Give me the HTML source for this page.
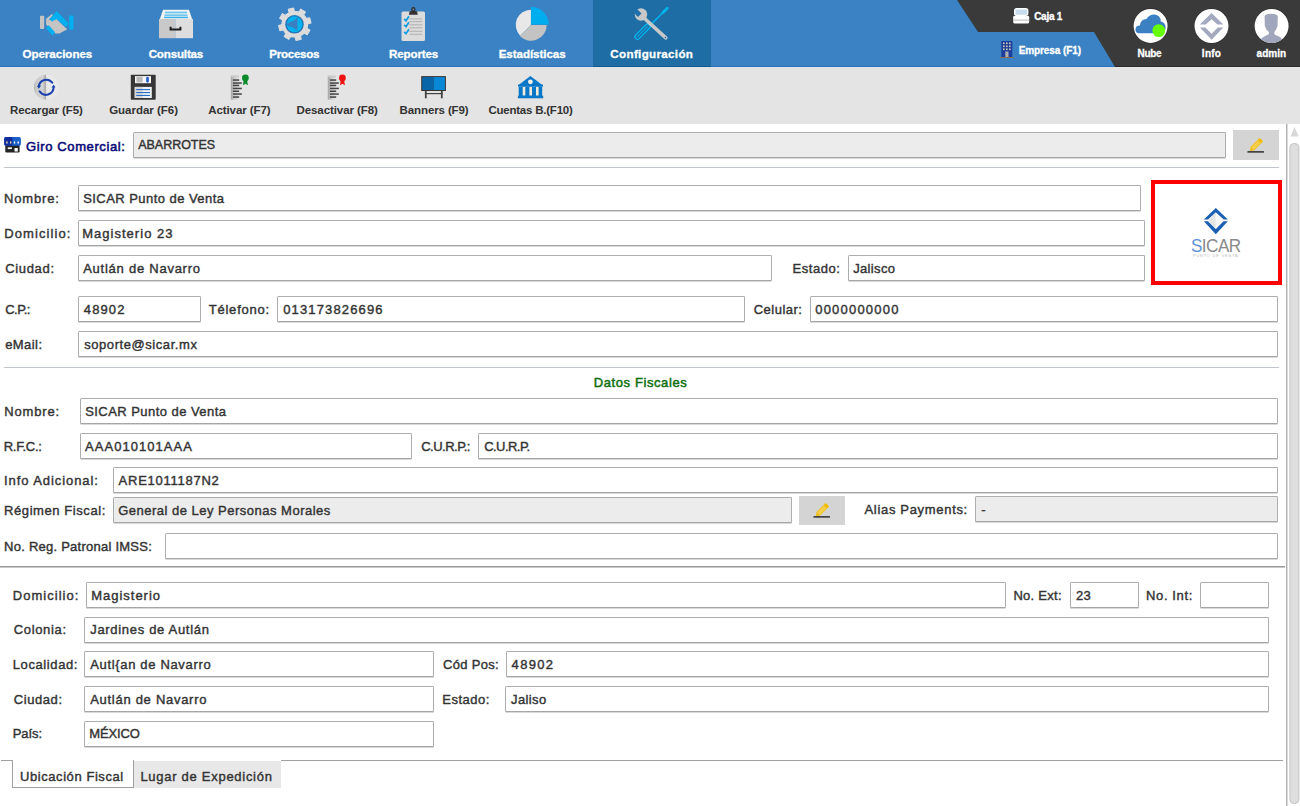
<!DOCTYPE html>
<html><head><meta charset="utf-8"><style>
html,body{margin:0;padding:0;width:1300px;height:806px;overflow:hidden;background:#fff;position:relative}
.t{position:absolute;white-space:nowrap;font-family:"Liberation Sans",sans-serif}
.b,.r,.s{position:absolute;box-sizing:content-box}
.s{overflow:visible}
</style></head><body>
<div class="r" style="left:0px;top:0px;width:1300px;height:67px;background:#3a82c3;"></div>
<div class="r" style="left:0px;top:66px;width:1300px;height:1px;background:#2876c0;"></div>
<div class="r" style="left:593px;top:0px;width:118px;height:67px;background:#1e6da5;"></div>
<div class="r" style="left:593px;top:66px;width:118px;height:1px;background:#0c5c9c;"></div>
<svg class="s" style="left:0px;top:0px" width="1300" height="67" viewBox="0 0 1300 67"><polygon points="957,0 1300,0 1300,67 1115,67 1094,32 978,32" fill="#3a3a3a"/><rect x="1115" y="66" width="185" height="1" fill="#2a2a2a"/></svg>
<div class="t" style="left:22.45px;top:48.38px;font-size:11.6px;line-height:11.6px;font-weight:bold;color:#fff;letter-spacing:-0.039px;-webkit-text-stroke:0.3px #fff;">Operaciones</div>
<div class="t" style="left:148.65px;top:48.38px;font-size:11.6px;line-height:11.6px;font-weight:bold;color:#fff;letter-spacing:-0.175px;-webkit-text-stroke:0.3px #fff;">Consultas</div>
<div class="t" style="left:269.35px;top:48.38px;font-size:11.6px;line-height:11.6px;font-weight:bold;color:#fff;letter-spacing:-0.293px;-webkit-text-stroke:0.3px #fff;">Procesos</div>
<div class="t" style="left:388.95px;top:48.38px;font-size:11.6px;line-height:11.6px;font-weight:bold;color:#fff;letter-spacing:-0.129px;-webkit-text-stroke:0.3px #fff;">Reportes</div>
<div class="t" style="left:498.65px;top:48.38px;font-size:11.6px;line-height:11.6px;font-weight:bold;color:#fff;letter-spacing:-0.056px;-webkit-text-stroke:0.3px #fff;">Estadísticas</div>
<div class="t" style="left:610.35px;top:48.38px;font-size:11.6px;line-height:11.6px;font-weight:bold;color:#fff;letter-spacing:0.334px;-webkit-text-stroke:0.3px #fff;">Configuración</div>
<div class="t" style="left:1034.15px;top:12.34px;font-size:10px;line-height:10px;font-weight:bold;color:#fff;letter-spacing:-0.240px;-webkit-text-stroke:0.3px #fff;">Caja 1</div>
<div class="t" style="left:1018.65px;top:46.14px;font-size:10px;line-height:10px;font-weight:bold;color:#fff;letter-spacing:-0.093px;-webkit-text-stroke:0.3px #fff;">Empresa (F1)</div>
<div class="t" style="left:1137.45px;top:49.14px;font-size:10px;line-height:10px;font-weight:bold;color:#fff;letter-spacing:-0.279px;-webkit-text-stroke:0.3px #fff;">Nube</div>
<div class="t" style="left:1201.85px;top:49.14px;font-size:10px;line-height:10px;font-weight:bold;color:#fff;letter-spacing:0.261px;-webkit-text-stroke:0.3px #fff;">Info</div>
<div class="t" style="left:1256.55px;top:49.14px;font-size:10px;line-height:10px;font-weight:bold;color:#fff;letter-spacing:0.040px;-webkit-text-stroke:0.3px #fff;">admin</div>
<div class="r" style="left:0px;top:67px;width:1300px;height:57px;background:#e4e4e4;"></div>
<div class="t" style="left:10.00px;top:104.97px;font-size:11.5px;line-height:11.5px;font-weight:bold;color:#333;letter-spacing:-0.109px;">Recargar (F5)</div>
<div class="t" style="left:109.20px;top:104.97px;font-size:11.5px;line-height:11.5px;font-weight:bold;color:#333;letter-spacing:-0.017px;">Guardar (F6)</div>
<div class="t" style="left:208.20px;top:104.97px;font-size:11.5px;line-height:11.5px;font-weight:bold;color:#333;letter-spacing:-0.076px;">Activar (F7)</div>
<div class="t" style="left:296.50px;top:104.97px;font-size:11.5px;line-height:11.5px;font-weight:bold;color:#333;letter-spacing:-0.080px;">Desactivar (F8)</div>
<div class="t" style="left:399.60px;top:104.97px;font-size:11.5px;line-height:11.5px;font-weight:bold;color:#333;letter-spacing:-0.115px;">Banners (F9)</div>
<div class="t" style="left:488.40px;top:104.97px;font-size:11.5px;line-height:11.5px;font-weight:bold;color:#333;letter-spacing:-0.222px;">Cuentas B.(F10)</div>
<div class="r" style="left:1286px;top:124px;width:1px;height:682px;background:#b0b0b0;"></div>
<div class="r" style="left:1287px;top:124px;width:1px;height:682px;background:#dcdcdc;"></div>
<div class="t" style="left:26.07px;top:139.60px;font-size:13px;line-height:13px;font-weight:normal;color:#0a0a78;letter-spacing:0.612px;-webkit-text-stroke:0.55px #0a0a78;">Giro Comercial:</div>
<div class="b" style="left:133px;top:132px;width:1091px;height:24px;background:#ececec;border:1px solid #adadad;border-bottom-color:#a6a6a6;border-radius:1.5px;box-shadow:0 1px 0 #d9d9d9;"></div>
<div class="t" style="left:138.20px;top:139.02px;font-size:12.5px;line-height:12.5px;font-weight:normal;color:#333;letter-spacing:-0.020px;-webkit-text-stroke:0.4px #333;">ABARROTES</div>
<div class="r" style="left:1233px;top:130px;width:46px;height:30px;background:#d4d4d4;"></div>
<div class="r" style="left:4px;top:167px;width:1275px;height:1px;background:#c0c4ce;"></div>
<div class="t" style="left:3.90px;top:192.00px;font-size:13px;line-height:13px;font-weight:normal;color:#333;letter-spacing:0.861px;-webkit-text-stroke:0.4px #333;">Nombre:</div>
<div class="b" style="left:78px;top:185px;width:1061px;height:24px;background:#fff;border:1px solid #adadad;border-bottom-color:#a6a6a6;border-radius:1.5px;box-shadow:0 1px 0 #d9d9d9;"></div>
<div class="t" style="left:83.20px;top:191.60px;font-size:13px;line-height:13px;font-weight:normal;color:#333;letter-spacing:0.451px;-webkit-text-stroke:0.4px #333;">SICAR Punto de Venta</div>
<div class="t" style="left:4.20px;top:227.00px;font-size:13px;line-height:13px;font-weight:normal;color:#333;letter-spacing:1.097px;-webkit-text-stroke:0.4px #333;">Domicilio:</div>
<div class="b" style="left:78px;top:220px;width:1065px;height:24px;background:#fff;border:1px solid #adadad;border-bottom-color:#a6a6a6;border-radius:1.5px;box-shadow:0 1px 0 #d9d9d9;"></div>
<div class="t" style="left:82.20px;top:226.60px;font-size:13px;line-height:13px;font-weight:normal;color:#333;letter-spacing:1.024px;-webkit-text-stroke:0.4px #333;">Magisterio 23</div>
<div class="t" style="left:5.20px;top:262.00px;font-size:13px;line-height:13px;font-weight:normal;color:#333;letter-spacing:0.667px;-webkit-text-stroke:0.4px #333;">Ciudad:</div>
<div class="b" style="left:78px;top:255px;width:692px;height:24px;background:#fff;border:1px solid #adadad;border-bottom-color:#a6a6a6;border-radius:1.5px;box-shadow:0 1px 0 #d9d9d9;"></div>
<div class="t" style="left:83.20px;top:261.60px;font-size:13px;line-height:13px;font-weight:normal;color:#333;letter-spacing:0.753px;-webkit-text-stroke:0.4px #333;">Autlán de Navarro</div>
<div class="t" style="left:792.50px;top:261.60px;font-size:13px;line-height:13px;font-weight:normal;color:#333;letter-spacing:0.555px;-webkit-text-stroke:0.4px #333;">Estado:</div>
<div class="b" style="left:848px;top:255px;width:295px;height:24px;background:#fff;border:1px solid #adadad;border-bottom-color:#a6a6a6;border-radius:1.5px;box-shadow:0 1px 0 #d9d9d9;"></div>
<div class="t" style="left:853.20px;top:261.60px;font-size:13px;line-height:13px;font-weight:normal;color:#333;letter-spacing:0.349px;-webkit-text-stroke:0.4px #333;">Jalisco</div>
<div class="t" style="left:5.20px;top:303.00px;font-size:13px;line-height:13px;font-weight:normal;color:#333;letter-spacing:-0.502px;-webkit-text-stroke:0.4px #333;">C.P.:</div>
<div class="b" style="left:78px;top:296px;width:121px;height:24px;background:#fff;border:1px solid #adadad;border-bottom-color:#a6a6a6;border-radius:1.5px;box-shadow:0 1px 0 #d9d9d9;"></div>
<div class="t" style="left:83.80px;top:302.60px;font-size:13px;line-height:13px;font-weight:normal;color:#333;letter-spacing:1.120px;-webkit-text-stroke:0.4px #333;">48902</div>
<div class="t" style="left:208.70px;top:302.60px;font-size:13px;line-height:13px;font-weight:normal;color:#333;letter-spacing:0.789px;-webkit-text-stroke:0.4px #333;">Télefono:</div>
<div class="b" style="left:277px;top:296px;width:466px;height:24px;background:#fff;border:1px solid #adadad;border-bottom-color:#a6a6a6;border-radius:1.5px;box-shadow:0 1px 0 #d9d9d9;"></div>
<div class="t" style="left:283.20px;top:302.60px;font-size:13px;line-height:13px;font-weight:normal;color:#333;letter-spacing:1.143px;-webkit-text-stroke:0.4px #333;">013173826696</div>
<div class="t" style="left:753.70px;top:302.60px;font-size:13px;line-height:13px;font-weight:normal;color:#333;letter-spacing:0.488px;-webkit-text-stroke:0.4px #333;">Celular:</div>
<div class="b" style="left:810px;top:296px;width:466px;height:24px;background:#fff;border:1px solid #adadad;border-bottom-color:#a6a6a6;border-radius:1.5px;box-shadow:0 1px 0 #d9d9d9;"></div>
<div class="t" style="left:815.20px;top:302.60px;font-size:13px;line-height:13px;font-weight:normal;color:#333;letter-spacing:1.214px;-webkit-text-stroke:0.4px #333;">0000000000</div>
<div class="t" style="left:5.20px;top:338.00px;font-size:13px;line-height:13px;font-weight:normal;color:#333;letter-spacing:0.427px;-webkit-text-stroke:0.4px #333;">eMail:</div>
<div class="b" style="left:78px;top:331px;width:1198px;height:24px;background:#fff;border:1px solid #adadad;border-bottom-color:#a6a6a6;border-radius:1.5px;box-shadow:0 1px 0 #d9d9d9;"></div>
<div class="t" style="left:84.20px;top:337.60px;font-size:13px;line-height:13px;font-weight:normal;color:#333;letter-spacing:0.565px;-webkit-text-stroke:0.4px #333;">soporte@sicar.mx</div>
<div class="b" style="left:1151px;top:180px;width:123px;height:97px;border:4px solid #f00;background:#fff"></div>
<div class="r" style="left:4px;top:367px;width:1275px;height:1px;background:#c0c4ce;"></div>
<div class="t" style="left:593.75px;top:376.30px;font-size:13px;line-height:13px;font-weight:normal;color:#0f6f0f;letter-spacing:0.596px;-webkit-text-stroke:0.5px #0f6f0f;">Datos Fiscales</div>
<div class="t" style="left:4.20px;top:405.00px;font-size:13px;line-height:13px;font-weight:normal;color:#333;letter-spacing:0.861px;-webkit-text-stroke:0.4px #333;">Nombre:</div>
<div class="b" style="left:80px;top:398px;width:1196px;height:24px;background:#fff;border:1px solid #adadad;border-bottom-color:#a6a6a6;border-radius:1.5px;box-shadow:0 1px 0 #d9d9d9;"></div>
<div class="t" style="left:85.20px;top:404.60px;font-size:13px;line-height:13px;font-weight:normal;color:#333;letter-spacing:0.451px;-webkit-text-stroke:0.4px #333;">SICAR Punto de Venta</div>
<div class="t" style="left:3.70px;top:440.00px;font-size:13px;line-height:13px;font-weight:normal;color:#333;letter-spacing:-0.252px;-webkit-text-stroke:0.4px #333;">R.F.C.:</div>
<div class="b" style="left:80px;top:433px;width:330px;height:24px;background:#fff;border:1px solid #adadad;border-bottom-color:#a6a6a6;border-radius:1.5px;box-shadow:0 1px 0 #d9d9d9;"></div>
<div class="t" style="left:85.00px;top:439.60px;font-size:13px;line-height:13px;font-weight:normal;color:#333;letter-spacing:1.051px;-webkit-text-stroke:0.4px #333;">AAA010101AAA</div>
<div class="t" style="left:421.20px;top:440.00px;font-size:13px;line-height:13px;font-weight:normal;color:#333;letter-spacing:-0.501px;-webkit-text-stroke:0.4px #333;">C.U.R.P.:</div>
<div class="b" style="left:478px;top:433px;width:798px;height:24px;background:#fff;border:1px solid #adadad;border-bottom-color:#a6a6a6;border-radius:1.5px;box-shadow:0 1px 0 #d9d9d9;"></div>
<div class="t" style="left:484.20px;top:439.60px;font-size:13px;line-height:13px;font-weight:normal;color:#333;letter-spacing:-0.542px;-webkit-text-stroke:0.4px #333;">C.U.R.P.</div>
<div class="t" style="left:4.10px;top:474.00px;font-size:13px;line-height:13px;font-weight:normal;color:#333;letter-spacing:0.918px;-webkit-text-stroke:0.4px #333;">Info Adicional:</div>
<div class="b" style="left:113px;top:467px;width:1163px;height:24px;background:#fff;border:1px solid #adadad;border-bottom-color:#a6a6a6;border-radius:1.5px;box-shadow:0 1px 0 #d9d9d9;"></div>
<div class="t" style="left:118.60px;top:473.60px;font-size:13px;line-height:13px;font-weight:normal;color:#333;letter-spacing:0.746px;-webkit-text-stroke:0.4px #333;">ARE1011187N2</div>
<div class="t" style="left:4.10px;top:504.00px;font-size:13px;line-height:13px;font-weight:normal;color:#333;letter-spacing:0.573px;-webkit-text-stroke:0.4px #333;">Régimen Fiscal:</div>
<div class="b" style="left:113px;top:497px;width:677px;height:24px;background:#ececec;border:1px solid #adadad;border-bottom-color:#a6a6a6;border-radius:1.5px;box-shadow:0 1px 0 #d9d9d9;"></div>
<div class="t" style="left:118.20px;top:503.60px;font-size:13px;line-height:13px;font-weight:normal;color:#333;letter-spacing:0.494px;-webkit-text-stroke:0.4px #333;">General de Ley Personas Morales</div>
<div class="r" style="left:799px;top:496px;width:46px;height:29px;background:#d4d4d4;"></div>
<div class="t" style="left:864.50px;top:503.00px;font-size:13px;line-height:13px;font-weight:normal;color:#333;letter-spacing:0.679px;-webkit-text-stroke:0.4px #333;">Alias Payments:</div>
<div class="b" style="left:975px;top:496px;width:301px;height:24px;background:#ececec;border:1px solid #adadad;border-bottom-color:#a6a6a6;border-radius:1.5px;box-shadow:0 1px 0 #d9d9d9;"></div>
<div class="t" style="left:981.20px;top:502.60px;font-size:13px;line-height:13px;font-weight:normal;color:#333;letter-spacing:0.600px;-webkit-text-stroke:0.4px #333;">-</div>
<div class="t" style="left:4.10px;top:540.00px;font-size:13px;line-height:13px;font-weight:normal;color:#333;letter-spacing:0.244px;-webkit-text-stroke:0.4px #333;">No. Reg. Patronal IMSS:</div>
<div class="b" style="left:165px;top:533px;width:1111px;height:24px;background:#fff;border:1px solid #adadad;border-bottom-color:#a6a6a6;border-radius:1.5px;box-shadow:0 1px 0 #d9d9d9;"></div>
<div class="r" style="left:0px;top:566px;width:1285px;height:1px;background:#9a9a9a;"></div>
<div class="r" style="left:0px;top:567px;width:1285px;height:1px;background:#c8c8c8;"></div>
<div class="t" style="left:12.80px;top:588.60px;font-size:13px;line-height:13px;font-weight:normal;color:#333;letter-spacing:1.030px;-webkit-text-stroke:0.4px #333;">Domicilio:</div>
<div class="b" style="left:86px;top:582px;width:918px;height:24px;background:#fff;border:1px solid #adadad;border-bottom-color:#a6a6a6;border-radius:1.5px;box-shadow:0 1px 0 #d9d9d9;"></div>
<div class="t" style="left:91.20px;top:588.60px;font-size:13px;line-height:13px;font-weight:normal;color:#333;letter-spacing:0.985px;-webkit-text-stroke:0.4px #333;">Magisterio</div>
<div class="t" style="left:1013.40px;top:588.80px;font-size:13px;line-height:13px;font-weight:normal;color:#333;letter-spacing:0.282px;-webkit-text-stroke:0.4px #333;">No. Ext:</div>
<div class="b" style="left:1070px;top:582px;width:67px;height:24px;background:#fff;border:1px solid #adadad;border-bottom-color:#a6a6a6;border-radius:1.5px;box-shadow:0 1px 0 #d9d9d9;"></div>
<div class="t" style="left:1076.00px;top:588.60px;font-size:13px;line-height:13px;font-weight:normal;color:#333;letter-spacing:0.170px;-webkit-text-stroke:0.4px #333;">23</div>
<div class="t" style="left:1146.00px;top:588.80px;font-size:13px;line-height:13px;font-weight:normal;color:#333;letter-spacing:0.629px;-webkit-text-stroke:0.4px #333;">No. Int:</div>
<div class="b" style="left:1200px;top:582px;width:67px;height:24px;background:#fff;border:1px solid #adadad;border-bottom-color:#a6a6a6;border-radius:1.5px;box-shadow:0 1px 0 #d9d9d9;"></div>
<div class="t" style="left:13.80px;top:623.40px;font-size:13px;line-height:13px;font-weight:normal;color:#333;letter-spacing:0.645px;-webkit-text-stroke:0.4px #333;">Colonia:</div>
<div class="b" style="left:84px;top:617px;width:1183px;height:24px;background:#fff;border:1px solid #adadad;border-bottom-color:#a6a6a6;border-radius:1.5px;box-shadow:0 1px 0 #d9d9d9;"></div>
<div class="t" style="left:90.20px;top:623.40px;font-size:13px;line-height:13px;font-weight:normal;color:#333;letter-spacing:0.691px;-webkit-text-stroke:0.4px #333;">Jardines de Autlán</div>
<div class="t" style="left:12.80px;top:658.00px;font-size:13px;line-height:13px;font-weight:normal;color:#333;letter-spacing:0.594px;-webkit-text-stroke:0.4px #333;">Localidad:</div>
<div class="b" style="left:84px;top:651px;width:348px;height:24px;background:#fff;border:1px solid #adadad;border-bottom-color:#a6a6a6;border-radius:1.5px;box-shadow:0 1px 0 #d9d9d9;"></div>
<div class="t" style="left:90.20px;top:657.60px;font-size:13px;line-height:13px;font-weight:normal;color:#333;letter-spacing:0.665px;-webkit-text-stroke:0.4px #333;">Autl{an de Navarro</div>
<div class="t" style="left:443.00px;top:658.00px;font-size:13px;line-height:13px;font-weight:normal;color:#333;letter-spacing:0.306px;-webkit-text-stroke:0.4px #333;">Cód Pos:</div>
<div class="b" style="left:506px;top:651px;width:761px;height:24px;background:#fff;border:1px solid #adadad;border-bottom-color:#a6a6a6;border-radius:1.5px;box-shadow:0 1px 0 #d9d9d9;"></div>
<div class="t" style="left:511.60px;top:657.60px;font-size:13px;line-height:13px;font-weight:normal;color:#333;letter-spacing:1.320px;-webkit-text-stroke:0.4px #333;">48902</div>
<div class="t" style="left:13.80px;top:693.00px;font-size:13px;line-height:13px;font-weight:normal;color:#333;letter-spacing:0.567px;-webkit-text-stroke:0.4px #333;">Ciudad:</div>
<div class="b" style="left:84px;top:686px;width:348px;height:24px;background:#fff;border:1px solid #adadad;border-bottom-color:#a6a6a6;border-radius:1.5px;box-shadow:0 1px 0 #d9d9d9;"></div>
<div class="t" style="left:90.20px;top:692.60px;font-size:13px;line-height:13px;font-weight:normal;color:#333;letter-spacing:0.716px;-webkit-text-stroke:0.4px #333;">Autlán de Navarro</div>
<div class="t" style="left:442.20px;top:693.00px;font-size:13px;line-height:13px;font-weight:normal;color:#333;letter-spacing:0.521px;-webkit-text-stroke:0.4px #333;">Estado:</div>
<div class="b" style="left:505px;top:686px;width:762px;height:24px;background:#fff;border:1px solid #adadad;border-bottom-color:#a6a6a6;border-radius:1.5px;box-shadow:0 1px 0 #d9d9d9;"></div>
<div class="t" style="left:511.00px;top:692.60px;font-size:13px;line-height:13px;font-weight:normal;color:#333;letter-spacing:0.379px;-webkit-text-stroke:0.4px #333;">Jaliso</div>
<div class="t" style="left:12.80px;top:727.40px;font-size:13px;line-height:13px;font-weight:normal;color:#333;letter-spacing:-0.103px;-webkit-text-stroke:0.4px #333;">País:</div>
<div class="b" style="left:84px;top:721px;width:348px;height:24px;background:#fff;border:1px solid #adadad;border-bottom-color:#a6a6a6;border-radius:1.5px;box-shadow:0 1px 0 #d9d9d9;"></div>
<div class="t" style="left:89.20px;top:727.40px;font-size:13px;line-height:13px;font-weight:normal;color:#333;letter-spacing:-0.114px;-webkit-text-stroke:0.4px #333;">MÉXICO</div>
<div class="r" style="left:1px;top:760px;width:11px;height:1px;background:#a0a0a0;"></div>
<div class="r" style="left:281px;top:760px;width:1002px;height:1px;background:#a0a0a0;"></div>
<div class="r" style="left:133px;top:761px;width:148px;height:27px;background:#e8e8e8;"></div>
<div class="b" style="left:12px;top:760px;width:120px;height:27px;border:1px solid #a0a0a0;border-top:none;background:#fff"></div>
<div class="t" style="left:20.00px;top:770.20px;font-size:13px;line-height:13px;font-weight:normal;color:#333;letter-spacing:0.570px;-webkit-text-stroke:0.4px #333;">Ubicación Fiscal</div>
<div class="t" style="left:140.40px;top:770.20px;font-size:13px;line-height:13px;font-weight:normal;color:#333;letter-spacing:0.722px;-webkit-text-stroke:0.4px #333;">Lugar de Expedición</div>
<svg class="s" style="left:36px;top:6px" width="42" height="34" viewBox="0 0 42 34">
<rect x="4" y="9.7" width="4.2" height="13.3" rx="1" fill="#c4c4c4"/>
<rect x="33.1" y="9.5" width="4.4" height="13.9" rx="1" fill="#00b0f0"/>
<polygon points="10.1,12.7 16,8 17,9 12.7,14 20.3,13 31.2,23.2 23.6,27.4 19,27.4 10.1,18.6" fill="#c4c4c4"/>
<polygon points="13.9,13.1 20.7,5.5 32.1,16.9 31.4,19.8 29.5,20.3 20.7,12.7 16,15.2" fill="#00b0f0" stroke="#00b0f0" stroke-width="0.6" stroke-linejoin="round"/>
<polygon points="10,22.3 12.7,19.2 19.2,26.4 16.3,29.6" fill="#00b0f0"/>
</svg>
<svg class="s" style="left:155px;top:6px" width="42" height="36" viewBox="0 0 42 36">
<polygon points="8,3.8 34,3.8 37.2,13.2 4.8,13.2" fill="#f2f2f2"/>
<rect x="10" y="5.6" width="22" height="1.8" fill="#6cc8ee"/>
<rect x="9.5" y="8.4" width="23" height="1.8" fill="#6cc8ee"/>
<rect x="9" y="10.8" width="24" height="1.4" fill="#3cb4ea"/>
<rect x="4" y="13" width="16.3" height="19.2" fill="#c9c9c9"/>
<rect x="20.3" y="13" width="17.7" height="19.2" fill="#dedede"/>
<path d="M15.6,20.8 v2.6 h9.8 v-2.6" fill="none" stroke="#1e1e1e" stroke-width="2"/>
</svg>
<svg class="s" style="left:274px;top:4px" width="42" height="40" viewBox="0 0 42 40"><polygon points="22.71,7.54 24.96,8.09 26.78,5.14 31.33,7.89 29.57,10.88 31.10,12.60 32.30,14.58 35.67,13.78 36.95,18.94 33.59,19.81 33.46,22.11 32.91,24.36 35.86,26.18 33.11,30.73 30.12,28.97 28.40,30.50 26.42,31.70 27.22,35.07 22.06,36.35 21.19,32.99 18.89,32.86 16.64,32.31 14.82,35.26 10.27,32.51 12.03,29.52 10.50,27.80 9.30,25.82 5.93,26.62 4.65,21.46 8.01,20.59 8.14,18.29 8.69,16.04 5.74,14.22 8.49,9.67 11.48,11.43 13.20,9.90 15.18,8.70 14.38,5.33 19.54,4.05 20.41,7.41" fill="#dcdcdc" stroke="#dcdcdc" stroke-width="1.2" stroke-linejoin="round"/>
<circle cx="20.5" cy="20.3" r="9.3" fill="#2a72b4"/>
<circle cx="20.5" cy="20.3" r="8" fill="#00b2f0"/>
<polygon points="13,19.5 20,16.5 23.5,13 23.5,27 20,24 13,21.5" fill="#3a7fc0"/>
</svg>
<svg class="s" style="left:396px;top:4px" width="34" height="40" viewBox="0 0 34 40">
<rect x="5.5" y="7.4" width="23.5" height="29.6" rx="1.6" fill="#dcdcdc"/>
<path d="M12.9,10.7 L13.6,7.6 Q14,6.9 15,6.9 L19.7,6.9 Q20.7,6.9 21.1,7.6 L21.8,10.7 Z" fill="#333"/>
<circle cx="17.35" cy="5.2" r="2.2" fill="#333"/><circle cx="17.35" cy="5.4" r="0.9" fill="#6a8fb8"/>
<rect x="13.4" y="14.35" width="13" height="1.1" fill="#b4b4b4"/><rect x="13.4" y="17.05" width="13" height="1.1" fill="#b4b4b4"/><rect x="13.4" y="20.25" width="13" height="1.1" fill="#b4b4b4"/><rect x="13.4" y="23.25" width="13" height="1.1" fill="#b4b4b4"/><rect x="13.4" y="26.75" width="13" height="1.1" fill="#b4b4b4"/><rect x="13.4" y="29.75" width="13" height="1.1" fill="#b4b4b4"/><polyline points="8.2,14.9 10,16.8 12.9,12.3" fill="none" stroke="#0a9ce2" stroke-width="1.7"/><polyline points="8.2,20.8 10,22.7 12.9,18.2" fill="none" stroke="#0a9ce2" stroke-width="1.7"/><polyline points="8.2,27.8 10,29.7 12.9,25.2" fill="none" stroke="#0a9ce2" stroke-width="1.7"/></svg>
<svg class="s" style="left:512px;top:4px" width="42" height="40" viewBox="0 0 42 40">
<path d="M18.9,20.9 L8.15,31.65 A15.2,15.2 0 0 1 18.90,5.70 Z" fill="#e8e8e8"/>
<path d="M18.9,20.9 L34.70,20.90 A15.8,15.8 0 0 1 7.73,32.07 Z" fill="#c3c3c3"/>
<path d="M19.1,20.6 L19.10,3.00 A17.6,17.6 0 0 1 36.70,20.60 Z" fill="#00aeef"/>
</svg>
<svg class="s" style="left:630px;top:4px" width="42" height="40" viewBox="0 0 42 40">
<line x1="22" y1="19.5" x2="35" y2="6.5" stroke="#00b4f0" stroke-width="1.6"/>
<line x1="33" y1="8.5" x2="37.3" y2="4.3" stroke="#00b4f0" stroke-width="2.8" stroke-linecap="round"/>
<g transform="rotate(-45 12.5 27.7)"><rect x="3" y="25.2" width="19" height="5" rx="2.2" fill="none" stroke="#00b4f0" stroke-width="1.3"/><line x1="5" y1="27.7" x2="20" y2="27.7" stroke="#00b4f0" stroke-width="1"/></g>
<line x1="14" y1="14" x2="35.8" y2="33.8" stroke="#c8c8c8" stroke-width="3.6" stroke-linecap="round"/>
<circle cx="11" cy="10.5" r="6.2" fill="#c8c8c8"/>
<rect x="4.5" y="4.5" width="5" height="7" transform="rotate(-45 8 8)" fill="#1f6fab"/>
<circle cx="35.4" cy="33.6" r="0.8" fill="#1f6fab"/>
</svg>
<svg class="s" style="left:1013px;top:8px" width="17" height="16" viewBox="0 0 17 16">
<rect x="1.7" y="0.8" width="13" height="6.6" rx="1.8" fill="#c7dcef" stroke="#fff" stroke-width="1.4"/>
<rect x="0.2" y="8" width="16" height="7.4" rx="1.3" fill="#fff"/>
<rect x="0.2" y="11.7" width="16" height="0.7" fill="#9a9a9a"/>
</svg>
<svg class="s" style="left:1000px;top:41px" width="14" height="17" viewBox="0 0 14 17">
<rect x="1.3" y="0" width="11" height="16" fill="#1c3f9e"/>
<rect x="5.3" y="10.5" width="3.2" height="5.5" fill="#b0b0b0"/>
<rect x="0" y="16" width="14" height="1" fill="#8a6d4a"/>
<rect x="3" y="1.5" width="1.6" height="1.6" fill="#d8ceb0"/><rect x="3" y="4.5" width="1.6" height="1.6" fill="#d8ceb0"/><rect x="3" y="7.5" width="1.6" height="1.6" fill="#d8ceb0"/><rect x="6" y="1.5" width="1.6" height="1.6" fill="#d8ceb0"/><rect x="6" y="4.5" width="1.6" height="1.6" fill="#d8ceb0"/><rect x="6" y="7.5" width="1.6" height="1.6" fill="#d8ceb0"/><rect x="9" y="1.5" width="1.6" height="1.6" fill="#d8ceb0"/><rect x="9" y="4.5" width="1.6" height="1.6" fill="#d8ceb0"/><rect x="9" y="7.5" width="1.6" height="1.6" fill="#d8ceb0"/></svg>
<svg class="s" style="left:1130px;top:6px" width="42" height="40" viewBox="0 0 42 40">
<circle cx="20.6" cy="19.9" r="17.6" fill="#222" opacity="0.5"/>
<circle cx="20.6" cy="19.9" r="17" fill="#fff"/>
<path d="M8.5,27.2 Q5.2,27 5.5,23 Q6,19.5 10,19.6 Q10.5,13 16.5,13 Q19,8.4 24.5,8.5 Q30.5,9 30.8,15.5 Q35.8,16.5 35.6,22 Q35.3,27.2 30,27.2 Z" fill="#3a80c3"/>
<circle cx="28.8" cy="24.6" r="6.4" fill="#66ff00"/>
</svg>
<svg class="s" style="left:1190px;top:6px" width="42" height="40" viewBox="0 0 42 40">
<circle cx="21.5" cy="20" r="17.6" fill="#222" opacity="0.5"/>
<circle cx="21.5" cy="20" r="17" fill="#fff"/>
<polygon points="21.6,7 33.3,18.6 27.5,18.6 21.6,13.2 15.8,18.6 9.7,18.6" fill="#a3aabf"/>
<polygon points="9.9,21.4 15.4,21.4 21.6,27.8 27.8,21.4 33.3,21.4 21.6,33.8" fill="#a3aabf"/>
</svg>
<svg class="s" style="left:1250px;top:6px" width="42" height="40" viewBox="0 0 42 40">
<circle cx="21.6" cy="20" r="17.6" fill="#222" opacity="0.5"/>
<clipPath id="adc"><circle cx="21.6" cy="20" r="17"/></clipPath>
<circle cx="21.6" cy="20" r="17" fill="#fff"/>
<g clip-path="url(#adc)" fill="#a0a6bc">
<path d="M14.6,10.5 Q15,7.8 21,7.8 Q27.5,7.8 27.8,10.5 L27.5,20 Q26,24.5 24.2,26 L24.6,28.5 Q30,30.5 32,33 L32,40 L11,40 L11,33 Q13,30.5 18.6,28.5 L19,26 Q16,24 14.8,20 Z"/>
</g>
</svg>
<svg class="s" style="left:30px;top:72px" width="30" height="30" viewBox="0 0 30 30">
<defs><linearGradient id="rg" x1="0" x2="1"><stop offset="0" stop-color="#b4b4b4"/><stop offset="0.15" stop-color="#c8c8c8"/><stop offset="0.7" stop-color="#d4d4d4"/><stop offset="1" stop-color="#a4a4a4"/></linearGradient></defs>
<path d="M16.3,2.8 A12.4,12.4 0 0 0 16.3,27.7 Z" fill="url(#rg)"/>
<path d="M16.3,2.8 A12.4,12.4 0 0 1 16.3,27.7 Z" fill="#e9e9e9"/>
<path d="M8.8,14.3 A7.6,7.6 0 0 1 22.3,10.6" fill="none" stroke="#1a3fae" stroke-width="2" stroke-linecap="round"/>
<path d="M9.6,19.3 A7.6,7.6 0 0 0 23.6,15.3" fill="none" stroke="#1a3fae" stroke-width="2" stroke-linecap="round"/>
<polygon points="7,14 11.2,13.6 8.8,16.8" fill="#1543b0"/>
<polygon points="21.5,15.5 25.5,15.2 23.6,12.8" fill="#1543b0"/>
</svg>
<svg class="s" style="left:128px;top:72px" width="30" height="30" viewBox="0 0 30 30">
<rect x="2.8" y="2.8" width="24.9" height="24.9" rx="0.8" fill="#363636"/>
<rect x="7" y="4.1" width="16" height="7.1" fill="#f4f4f4"/>
<rect x="8.5" y="4.8" width="6" height="5.6" fill="#b8b8b8"/>
<rect x="18.2" y="4.8" width="2.6" height="5.6" rx="1.2" fill="#1a5ac8"/>
<rect x="6.7" y="14.9" width="17.1" height="11.1" fill="#eef2f6"/>
<rect x="6.7" y="14.9" width="8" height="11.1" fill="#d6d6d6"/>
<rect x="8.2" y="17" width="13.8" height="1.1" fill="#2a70c8"/>
<rect x="8.2" y="20" width="13.8" height="1.1" fill="#2a70c8"/>
<rect x="8.2" y="22.9" width="13.8" height="1.1" fill="#2a70c8"/>
</svg>
<svg class="s" style="left:226px;top:72px" width="30" height="30" viewBox="0 0 30 30"><defs><linearGradient id="cg0a8a2a" x1="0" x2="1"><stop offset="0" stop-color="#a4a4a4"/><stop offset="0.35" stop-color="#c8c8c8"/><stop offset="1" stop-color="#e6e6e6"/></linearGradient></defs><rect x="4.8" y="3.7" width="8.6" height="24" fill="url(#cg0a8a2a)"/><rect x="4.8" y="3.7" width="8.2" height="1.5" fill="#c8c8c8"/><rect x="6.9" y="7.3" width="6.3" height="1.5" fill="#444"/><rect x="6.9" y="10.3" width="8.9" height="1.5" fill="#444"/><rect x="6.9" y="12.7" width="6.3" height="1.5" fill="#444"/><rect x="6.9" y="15.7" width="8.9" height="1.5" fill="#444"/><rect x="6.9" y="18.5" width="6.3" height="1.5" fill="#444"/><rect x="6.9" y="21.3" width="8.9" height="1.5" fill="#444"/><rect x="6.9" y="24.3" width="6.3" height="1.5" fill="#444"/>
<polygon points="17.8,7.5 16.9,13.2 19.4,11.8 21.9,13.2 21,7.5" fill="#0a8a2a"/><circle cx="19.4" cy="6" r="3.4" fill="#0a8a2a"/></svg>
<svg class="s" style="left:322.8px;top:72px" width="30" height="30" viewBox="0 0 30 30"><defs><linearGradient id="cgee1111" x1="0" x2="1"><stop offset="0" stop-color="#a4a4a4"/><stop offset="0.35" stop-color="#c8c8c8"/><stop offset="1" stop-color="#e6e6e6"/></linearGradient></defs><rect x="4.8" y="3.7" width="8.6" height="24" fill="url(#cgee1111)"/><rect x="4.8" y="3.7" width="8.2" height="1.5" fill="#c8c8c8"/><rect x="6.9" y="7.3" width="6.3" height="1.5" fill="#444"/><rect x="6.9" y="10.3" width="8.9" height="1.5" fill="#444"/><rect x="6.9" y="12.7" width="6.3" height="1.5" fill="#444"/><rect x="6.9" y="15.7" width="8.9" height="1.5" fill="#444"/><rect x="6.9" y="18.5" width="6.3" height="1.5" fill="#444"/><rect x="6.9" y="21.3" width="8.9" height="1.5" fill="#444"/><rect x="6.9" y="24.3" width="6.3" height="1.5" fill="#444"/>
<polygon points="17.8,7.5 16.9,13.2 19.4,11.8 21.9,13.2 21,7.5" fill="#ee1111"/><circle cx="19.4" cy="6" r="3.4" fill="#ee1111"/></svg>
<svg class="s" style="left:416px;top:72px" width="34" height="30" viewBox="0 0 34 30">
<rect x="5.2" y="4.1" width="24.7" height="14.9" fill="#333"/>
<rect x="6.2" y="5.1" width="11.5" height="12.9" fill="#0a64a8"/>
<rect x="17.7" y="5.1" width="11.2" height="12.9" fill="#0a88d8"/>
<rect x="8.9" y="19" width="1.8" height="7.3" fill="#444"/>
<rect x="24.9" y="19" width="1.8" height="7.3" fill="#444"/>
<rect x="8.9" y="21" width="17.8" height="1.2" fill="#444"/>
</svg>
<svg class="s" style="left:516px;top:72px" width="30" height="30" viewBox="0 0 30 30">
<polygon points="14.4,4.1 26.9,13.4 1.9,13.4" fill="#0a78c8"/>
<rect x="2" y="12.6" width="25" height="2" fill="#0a78c8"/>
<circle cx="14.4" cy="9.8" r="2.4" fill="#f4f0e8"/>
<rect x="2.7" y="14.5" width="23.5" height="9.6" fill="#0a78c8"/>
<rect x="6.7" y="15" width="2.6" height="8.7" fill="#f2ead8"/>
<rect x="13.4" y="15" width="2.6" height="8.7" fill="#f2ead8"/>
<rect x="20" y="15" width="2.6" height="8.7" fill="#f2ead8"/>
<rect x="1.9" y="23.7" width="25.3" height="2.6" fill="#0a78c8"/>
</svg>
<svg class="s" style="left:2px;top:133px" width="22" height="24" viewBox="0 0 22 24">
<rect x="3.3" y="11" width="14.3" height="8.6" rx="1" fill="#222"/>
<rect x="5.7" y="14.3" width="4.2" height="1.8" fill="#eee"/>
<rect x="12.5" y="14.9" width="3.3" height="3.6" rx="0.5" fill="#fff"/>
<rect x="2.2" y="3.9" width="16.7" height="8.9" rx="1.8" fill="#1a60c8"/>
<rect x="2.2" y="3.9" width="8.4" height="8.9" rx="1.8" fill="#122e9c"/>
<rect x="4.2" y="8.2" width="1.4" height="2.6" rx="0.7" fill="#f0e0b0"/>
<rect x="8" y="8.2" width="1.4" height="2.6" rx="0.7" fill="#f0e0b0"/>
<rect x="11.8" y="8.2" width="1.4" height="2.6" rx="0.7" fill="#fff"/>
<rect x="15.5" y="8.2" width="1.4" height="2.6" rx="0.7" fill="#fff"/>
</svg>
<svg class="s" style="left:1240px;top:133px" width="30" height="24" viewBox="0 0 30 24">
<rect x="7.4" y="17.9" width="16.6" height="1.9" rx="0.5" fill="#454545"/>
<g transform="rotate(-45 16.5 11.5)">
<rect x="10.5" y="9" width="10" height="5" fill="#f3c21a"/>
<rect x="11" y="10.3" width="9" height="0.8" fill="#f8de8a"/>
<rect x="11" y="12" width="9" height="0.8" fill="#f8de8a"/>
<rect x="20.3" y="8.8" width="3.2" height="5.4" rx="1.6" fill="#f2bd00"/>
<polygon points="10.5,9 10.5,14 7.4,11.5" fill="#f2bd00"/>
</g>
</svg>
<svg class="s" style="left:806px;top:498px" width="30" height="24" viewBox="0 0 30 24">
<rect x="7.4" y="17.9" width="16.6" height="1.9" rx="0.5" fill="#454545"/>
<g transform="rotate(-45 16.5 11.5)">
<rect x="10.5" y="9" width="10" height="5" fill="#f3c21a"/>
<rect x="11" y="10.3" width="9" height="0.8" fill="#f8de8a"/>
<rect x="11" y="12" width="9" height="0.8" fill="#f8de8a"/>
<rect x="20.3" y="8.8" width="3.2" height="5.4" rx="1.6" fill="#f2bd00"/>
<polygon points="10.5,9 10.5,14 7.4,11.5" fill="#f2bd00"/>
</g>
</svg>
<svg class="s" style="left:1190px;top:200px" width="52" height="62" viewBox="0 0 52 62">
<polygon points="25.8,7.9 37.9,19.6 33.6,19.6 25.8,12.6 18,19.6 13.8,19.6" fill="#1a5fb4"/>
<polygon points="13.8,21.3 18,21.3 25.8,29 33.6,21.3 37.9,21.3 25.8,34.2" fill="#1a5fb4"/>
<polygon points="25.8,12.6 18,19.8 25.8,29" fill="#e4e4e4"/>
<polygon points="25.8,12.6 33.6,19.8 25.8,29" fill="#f6f6f6"/>
</svg>
<div class="t" style="left:1191.30px;top:236.22px;font-size:19px;line-height:19px;font-weight:normal;color:#8a8a8a;letter-spacing:-0.600px;transform:scaleX(0.9);transform-origin:0 0;"><span style="color:#5b92d6">S</span>ICAR</div>
<div class="t" style="left:1193.00px;top:254.11px;font-size:4px;line-height:4px;font-weight:normal;color:#bbb;letter-spacing:0.763px;">PUNTO DE VENTA</div>
<svg class="s" style="left:1287px;top:124px" width="13" height="682" viewBox="0 0 13 682">
<polygon points="7.5,3 3.5,12.6 11.7,12.6" fill="#d8d8d8"/>
<rect x="2.9" y="19.5" width="9" height="660" rx="4" fill="#dedede" stroke="#c4c4c4" stroke-width="1"/>
</svg>
</body></html>
